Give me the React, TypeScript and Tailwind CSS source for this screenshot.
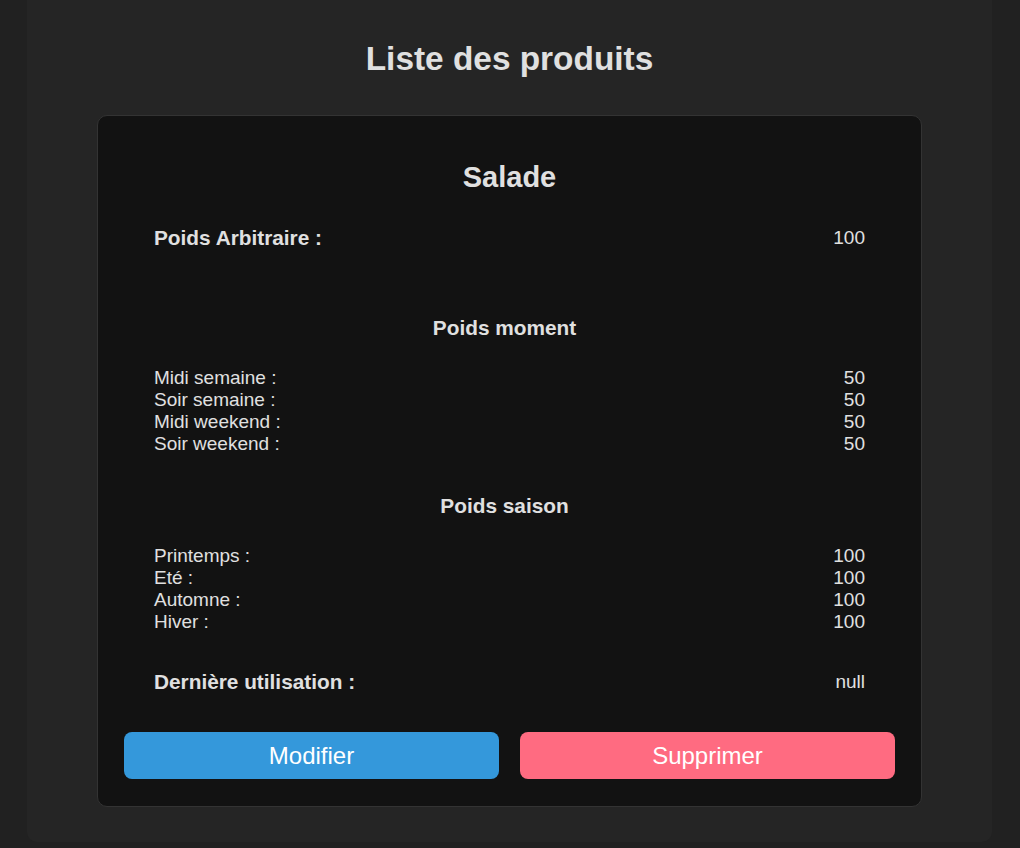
import React from "react";

const Row = ({ label, value }: { label: string; value: string }) => (
  <div className="flex justify-between text-[19px] leading-[22px]">
    <span>{label}</span>
    <span>{value}</span>
  </div>
);

export default function App() {
  return (
    <div
      className="min-h-[848px] bg-[#212121] text-[#e0e0e0]"
      style={{ fontFamily: '"Liberation Sans", Arial, sans-serif' }}
    >
      <div className="ml-[27px] w-[965px] h-[842px] bg-[#252525] rounded-b-[10px] pt-[40px]">
        <h1 className="text-center text-[33.4px] leading-[38px] font-bold">Liste des produits</h1>
        <div className="ml-[70px] mt-[37px] w-[825px] rounded-[10px] border border-[#333333] bg-[#121212] p-[26px] pb-[27px]">
          <h2 className="mt-[18px] text-center text-[29px] leading-[34px] font-bold">Salade</h2>
          <div className="px-[30px]">
            <div className="mt-[32px] flex justify-between text-[20.8px] leading-[24px]">
              <span className="font-bold">Poids Arbitraire :</span>
              <span className="text-[19px]">100</span>
            </div>
            <h3 className="mt-[66px] pr-[10px] text-center text-[20.8px] leading-[24px] font-bold">Poids moment</h3>
            <div className="mt-[27px]">
              <Row label="Midi semaine :" value="50" />
              <Row label="Soir semaine :" value="50" />
              <Row label="Midi weekend :" value="50" />
              <Row label="Soir weekend :" value="50" />
            </div>
            <h3 className="mt-[39px] pr-[10px] text-center text-[20.8px] leading-[24px] font-bold">Poids saison</h3>
            <div className="mt-[27px]">
              <Row label="Printemps :" value="100" />
              <Row label="Eté :" value="100" />
              <Row label="Automne :" value="100" />
              <Row label="Hiver :" value="100" />
            </div>
            <div className="mt-[37px] flex justify-between text-[20.8px] leading-[24px]">
              <span className="font-bold">Dernière utilisation :</span>
              <span className="text-[19px]">null</span>
            </div>
          </div>
          <div className="mt-[38px] flex gap-[21px]">
            <button className="h-[47px] flex-1 rounded-[8px] bg-[#3498db] text-[24px] text-white">Modifier</button>
            <button className="h-[47px] flex-1 rounded-[8px] bg-[#ff6b81] text-[24px] text-white">Supprimer</button>
          </div>
        </div>
      </div>
    </div>
  );
}
